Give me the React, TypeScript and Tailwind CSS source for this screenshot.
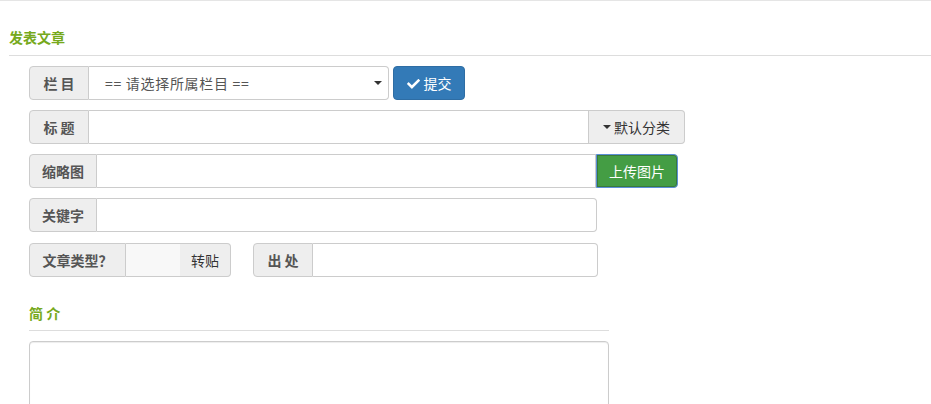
import React from "react";

const font = { fontFamily: '"Noto Sans CJK SC", "Liberation Sans", sans-serif' };

const Caret = () => (
  <span className="inline-block w-0 h-0 border-l-[4px] border-r-[4px] border-t-[4px] border-l-transparent border-r-transparent border-t-[#333]" />
);

const Label: React.FC<{ text: string; w: string }> = ({ text, w }) => (
  <div
    className={`${w} h-full flex items-center justify-center bg-[#eee] border border-[#ccc] rounded-l-[4px] text-[14px] font-bold text-[#555] shrink-0`}
  >
    {text}
  </div>
);

export default function App() {
  return (
    <div className="w-[931px] h-[404px] overflow-hidden bg-white border-t border-[#e5e5e5]" style={font}>
      {/* Header */}
      <div className="ml-[9px] pt-[26px] pb-[8px] border-b border-[#ddd]">
        <h2 className="text-[14px] leading-[20px] font-bold text-[#76a91c]">发表文章</h2>
      </div>

      <div className="pl-[29px] pt-[10px]">
        {/* 栏目 */}
        <div className="flex h-[34px] mb-[10px]">
          <Label text="栏 目" w="w-[60px]" />
          <div className="w-[300px] h-full flex items-center justify-between border border-l-0 border-[#ccc] rounded-r-[4px] pl-[16px] pr-[6px] text-[14px] text-[#555]">
            <span className="tracking-[0.7px]">== 请选择所属栏目 ==</span>
            <Caret />
          </div>
          <button className="ml-[4px] w-[72px] h-full flex items-center justify-center gap-[4px] bg-[#337ab7] border border-[#2e6da4] rounded-[4px] text-white text-[14px]">
            <svg width="13" height="11" viewBox="0 0 512 420" fill="white">
              <path d="M173.9 410.2L7.5 243.8c-10-10-10-26.2 0-36.2l36.2-36.2c10-10 26.2-10 36.2 0L192 283.5 432.1 43.4c10-10 26.2-10 36.2 0l36.2 36.2c10 10 10 26.2 0 36.2L210.1 410.2c-10 10-26.2 10-36.2 0z" />
            </svg>
            提交
          </button>
        </div>

        {/* 标题 */}
        <div className="flex h-[34px] mb-[10px]">
          <Label text="标 题" w="w-[60px]" />
          <div className="w-[500px] h-full border border-l-0 border-[#ccc]" />
          <button className="w-[96px] h-full flex items-center justify-center gap-[3px] bg-[#eee] border border-l-0 border-[#ccc] rounded-r-[4px] text-[14px] text-[#333]">
            <Caret />
            默认分类
          </button>
        </div>

        {/* 缩略图 */}
        <div className="flex h-[34px] mb-[10px]">
          <Label text="缩略图" w="w-[68px]" />
          <div className="w-[499px] h-full border border-l-0 border-[#ccc]" />
          <button className="w-[82px] h-full flex items-center justify-center bg-[#449d44] border border-[#5b8fd6] rounded-r-[4px] text-white text-[14px] shadow-[inset_0_0_0_1px_#3a7a3a]">
            上传图片
          </button>
        </div>

        {/* 关键字 */}
        <div className="flex h-[34px] mb-[11px]">
          <Label text="关键字" w="w-[68px]" />
          <div className="w-[500px] h-full border border-l-0 border-[#ccc] rounded-r-[4px]" />
        </div>

        {/* 文章类型 / 出处 */}
        <div className="flex h-[34px]">
          <Label text="文章类型？" w="w-[97px]" />
          <div className="w-[54px] h-full bg-[#f8f8f8] border-y border-[#ccc]" />
          <div className="w-[51px] h-full flex items-center justify-center bg-[#eee] border border-l-0 border-[#ccc] rounded-r-[4px] text-[14px] text-[#333]">
            转贴
          </div>
          <div className="ml-[22px] flex h-full">
            <Label text="出 处" w="w-[60px]" />
            <div className="w-[285px] h-full border border-l-0 border-[#ccc] rounded-r-[4px]" />
          </div>
        </div>

        {/* 简介 */}
        <div className="w-[580px] mt-[26px] pb-[7px] border-b border-[#ddd]">
          <h3 className="text-[14px] leading-[20px] font-bold text-[#76a91c]">简 介</h3>
        </div>
        <textarea className="mt-[10px] w-[580px] h-[120px] block border border-[#ccc] rounded-[4px] shadow-[inset_0_1px_1px_rgba(0,0,0,0.075)] resize-none" />
      </div>
    </div>
  );
}
